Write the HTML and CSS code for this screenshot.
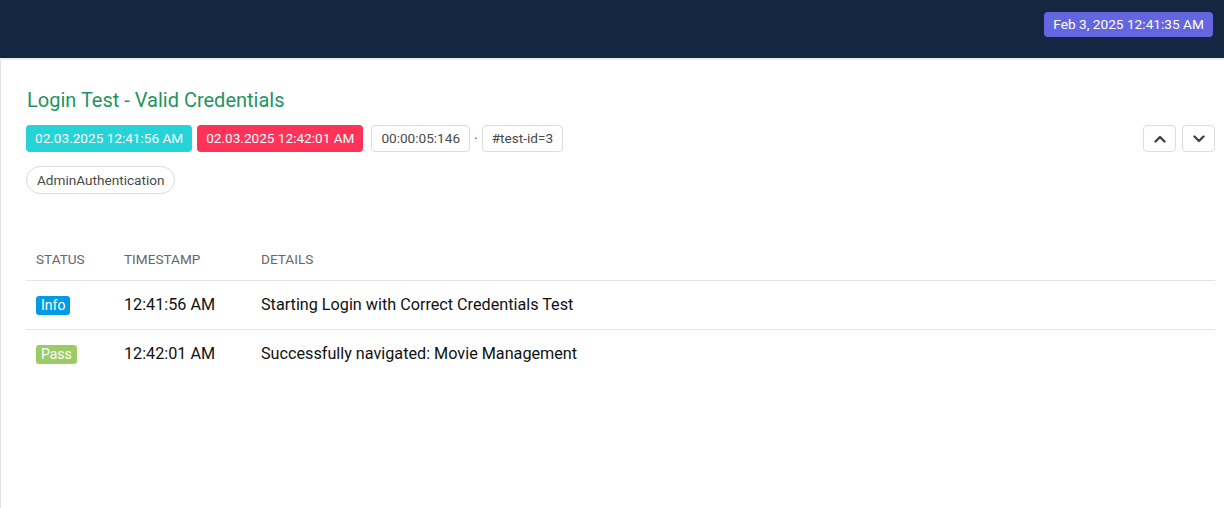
FILE: index.html
```html
<!DOCTYPE html>
<html>
<head>
<meta charset="utf-8">
<link rel="stylesheet" href="styles.css">
</head>
<body>
<header class="topbar">
  <span class="now">Feb 3, 2025 12:41:35 AM</span>
</header>
<main class="content">
  <h1 class="title">Login Test - Valid Credentials</h1>
  <div class="meta">
    <div class="chips">
      <span class="chip chip-start">02.03.2025 12:41:56 AM</span>
      <span class="chip chip-end">02.03.2025 12:42:01 AM</span>
      <span class="chip chip-plain chip-dur">00:00:05:146</span>
      <span class="dot">·</span>
      <span class="chip chip-plain">#test-id=3</span>
    </div>
    <div class="nav">
      <button class="navbtn" aria-label="up"><svg width="12" height="8" viewBox="0 0 12 8"><path d="M1.5 6.5 L6 2 L10.5 6.5" fill="none" stroke="#3d4350" stroke-width="2.4" stroke-linecap="round" stroke-linejoin="round"/></svg></button>
      <button class="navbtn" aria-label="down"><svg width="12" height="8" viewBox="0 0 12 8"><path d="M1.5 1.5 L6 6 L10.5 1.5" fill="none" stroke="#3d4350" stroke-width="2.4" stroke-linecap="round" stroke-linejoin="round"/></svg></button>
    </div>
  </div>
  <div class="tags"><span class="tag">AdminAuthentication</span></div>
  <table class="log">
    <thead>
      <tr><th class="c-status">Status</th><th class="c-time">Timestamp</th><th>Details</th></tr>
    </thead>
    <tbody>
      <tr><td><span class="st st-info">Info</span></td><td>12:41:56 AM</td><td>Starting Login with Correct Credentials Test</td></tr>
      <tr><td><span class="st st-pass">Pass</span></td><td>12:42:01 AM</td><td>Successfully navigated: Movie Management</td></tr>
    </tbody>
  </table>
</main>
</body>
</html>
```
FILE: styles.css
```css
* { box-sizing: border-box; }
html, body { margin: 0; padding: 0; background: #fff; }
body { font-family: Roboto, "Noto Sans", sans-serif; color: #1d1d1d; height: 508px; overflow: hidden; }
.topbar {
  height: 60px;
  background: #132743;
  display: flex;
  justify-content: flex-end;
  align-items: flex-start;
  padding: 12px 11px 0 0;
  border-bottom: 2px solid #ececec;
}
.now {
  background: #6466df;
  color: #fff;
  font-size: 13.7px;
  line-height: 25px;
  height: 25px;
  padding: 0 9px;
  border-radius: 4px;
}
.content {
  border-left: 1px solid #e2e2e2;
  padding: 29px 9px 0 25px;
  height: 448px;
}
.title {
  margin: 0 0 0 1px;
  font-size: 20px;
  font-weight: 400;
  line-height: 22px;
  color: #22945d;
}
.meta {
  display: flex;
  justify-content: space-between;
  align-items: center;
  margin-top: 14px;
}
.chips { display: flex; align-items: center; gap: 5px; }
.chip {
  font-size: 13.6px;
  height: 27px;
  line-height: 27px;
  padding: 0 9px;
  border-radius: 4px;
  color: #fff;
}
.chip-start { background: #26d3d6; }
.chip-end { background: #ff3358; }
.chip-plain {
  color: #4a4a4a;
  border: 1px solid #dcdcdc;
  line-height: 25px;
  padding: 0 9px;
}
.chip-dur { margin-left: 3px; }
.dot { color: #444; font-size: 14px; margin: 0 -1px; }
.nav { display: flex; gap: 6px; }
.navbtn {
  width: 33px;
  height: 27px;
  border: 1px solid #dcdcdc;
  border-radius: 4px;
  background: #fff;
  display: flex;
  align-items: center;
  justify-content: center;
  padding: 0;
}
.tags { margin-top: 14px; }
.tag {
  display: inline-block;
  font-size: 13.6px;
  color: #4a4a4a;
  border: 1px solid #dcdcdc;
  border-radius: 14px;
  height: 28px;
  line-height: 26px;
  padding: 0 10px;
}
.log {
  width: 100%;
  margin-top: 44px;
  border-collapse: collapse;
  font-size: 16.2px;
}
.log th {
  text-align: left;
  font-weight: 400;
  font-size: 13.6px;
  text-transform: uppercase;
  color: #666;
  padding: 0 10px;
  height: 42px;
  border-bottom: 1px solid #e4e4e4;
}
.c-status { width: 88px; }
.c-time { width: 137px; }
.log td {
  padding: 0 10px;
  height: 49px;
  border-bottom: 1px solid #e4e4e4;
  color: #111;
}
.log tbody tr:last-child td { border-bottom: none; }
.st {
  display: inline-block;
  font-size: 14px;
  color: #fff;
  border-radius: 3px;
  height: 19px;
  line-height: 19px;
  padding: 0 5px;
}
.st-info { background: #039be5; }
.st-pass { background: #9ccc65; }
```
